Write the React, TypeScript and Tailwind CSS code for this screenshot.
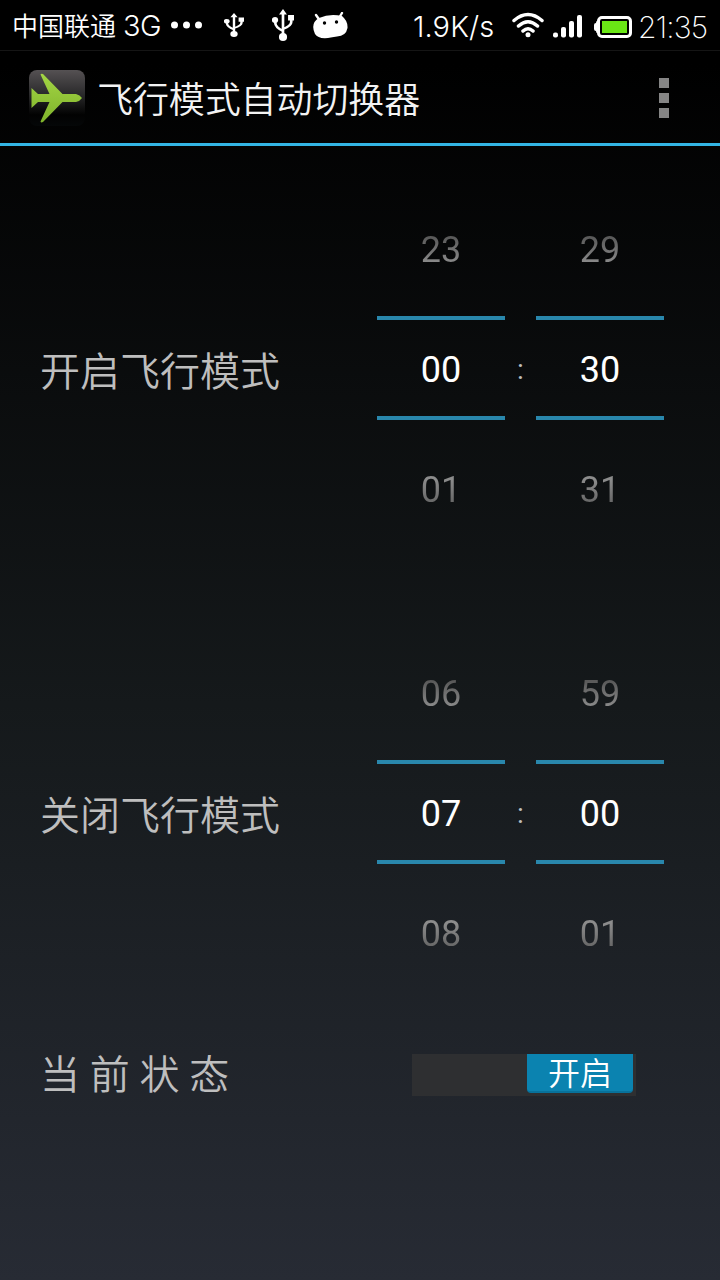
import React from "react";

const cjk = "font-['Roboto','Noto_Sans_CJK_SC',sans-serif]";

function Usb({ className }: { className: string }) {
  return (
    <svg viewBox="0 0 20 32" preserveAspectRatio="none" className={className} fill="none" stroke="#fff" strokeWidth="2.4">
      <path d="M10 4V28M3 11V14Q3 18 10 22M17.5 9V13Q17.5 17 10 20" />
      <ellipse cx="10" cy="28" rx="3.7" ry="3.9" fill="#fff" stroke="none" />
      <circle cx="2.7" cy="11" r="2.9" fill="#fff" stroke="none" />
      <path d="M14.6 6H20V11.5H14.6ZM10 0L13.6 5.5H6.4Z" fill="#fff" stroke="none" />
    </svg>
  );
}

function StatusBar() {
  return (
    <div className="flex h-[51px] items-center border-b border-[#151515] bg-black text-white">
      <div className="ml-3 w-[104px] whitespace-nowrap font-['Noto_Sans_CJK_SC',sans-serif] text-[26px] font-[350] leading-[48px]">中国联通</div>
      <div className="ml-[7px] w-[39px] pt-px font-['Inter',sans-serif] text-[29px] font-light leading-[50px] tracking-[-0.5px]">3G</div>
      <svg className="ml-[9px] h-2 w-8" viewBox="0 0 32 8" fill="#fff">
        <circle cx="3.5" cy="4" r="3.5" /><circle cx="15.5" cy="4" r="3.5" /><circle cx="27.5" cy="4" r="3.5" />
      </svg>
      <Usb className="ml-[21px] h-6 w-5" />
      <Usb className="ml-[28px] h-8 w-[22px]" />
      <svg className="ml-[19px] h-[27px] w-[35px]" viewBox="0 0 35 27">
        <path d="M3 3L6.5 8M29 1L26 6" stroke="#fff" strokeWidth="2.4" strokeLinecap="round" />
        <path d="M6 6Q17 1 29 4Q35 9 34.5 16Q33 24 24 24.5Q19 25 15 26Q5 27 2 22Q-3 11 6 6Z" fill="#fff" />
        <circle cx="11.5" cy="11" r="1.7" /><circle cx="23.5" cy="10" r="1.7" />
      </svg>
      <div className="ml-auto flex items-center">
        <div className="w-[82px] whitespace-nowrap pt-[3px] font-['Inter',sans-serif] text-[29px] font-light leading-[50px] tracking-[0.1px]">1.9K/s</div>
        <svg className="ml-[17px] h-[26px] w-8" viewBox="0 0 32 26" fill="none" stroke="#fff" strokeWidth="3.5" strokeLinecap="round">
          <path d="M2 8.5Q16-3.5 30 8.5M6.5 14Q16 5.5 25.5 14M11 19Q16 14.5 21 19" />
          <circle cx="16" cy="22.7" r="2.5" fill="#fff" stroke="none" />
        </svg>
        <svg className="ml-[9px] mt-0.5 h-6 w-[29px]" viewBox="0 0 29 24" fill="#fff">
          <rect y="18.5" width="5" height="5" rx="2" /><rect x="8" y="13" width="5" height="10.5" rx="2" />
          <rect x="16" y="7" width="5" height="16.5" rx="2" /><rect x="24" y="1" width="5" height="22.5" rx="2" />
        </svg>
        <svg className="ml-3 mt-1 h-[22px] w-[38px]" viewBox="0 0 38 22">
          <path d="M5 5H3Q2 5 2 7Q0 7 0 9V13Q0 15 2 15Q2 17 3 17H5Z" fill="#fff" />
          <rect x="4.5" y="1.5" width="32" height="19" rx="3.5" stroke="#fff" strokeWidth="3" />
          <rect x="8" y="5" width="25" height="12" fill="#6ae615" />
        </svg>
        <div className="mr-3 w-[76px] whitespace-nowrap pl-1.5 pt-[3px] font-['Inter',sans-serif] text-[30px] font-extralight leading-[48px] tracking-[-0.8px]">21:35</div>
      </div>
    </div>
  );
}

function ActionBar() {
  return (
    <div className="flex h-[95px] items-center border-b-[3px] border-[#33b5e5] pl-[29px] pr-[51px]">
      <svg className="mt-px h-14 w-14" viewBox="0 0 56 56">
        <defs>
          <linearGradient id="tile" x1="0" y1="0" x2="0" y2="1">
            <stop stopColor="#555153" /><stop offset=".45" stopColor="#29292a" /><stop offset=".8" stopColor="#020202" /><stop offset="1" stopColor="#050708" />
          </linearGradient>
          <linearGradient id="plane" x1="0" y1="0" x2="0" y2="1">
            <stop stopColor="#a3d544" /><stop offset="1" stopColor="#7fb32b" />
          </linearGradient>
        </defs>
        <rect width="56" height="56" rx="8" fill="url(#tile)" />
        <path d="M2.5 18L9 24H20.5L11.5 4.5Q12 3.5 14 4L33.5 24H47Q51 25 53 28Q51 31 47 32H33.5L14 52Q12 53 11.5 51.5L20.5 32H9L2.5 38Z" fill="url(#plane)" />
      </svg>
      <h1 className={`${cjk} ml-3 whitespace-nowrap pt-[7px] text-[36px] font-[350] leading-[54px] tracking-[-0.1px] text-[#f3f3f3]`}>飞行模式自动切换器</h1>
      <div className="ml-auto mt-0.5 flex flex-col gap-[5px]">
        <i className="size-2.5 bg-[#858585]" /><i className="size-2.5 bg-[#858585]" /><i className="size-2.5 bg-[#858585]" />
      </div>
    </div>
  );
}

function Picker({ values }: { values: string[] }) {
  return (
    <div className="flex w-32 flex-col text-center font-['Roboto',sans-serif] text-[36px] font-[370] leading-[42px]">
      <div className="mt-px h-[87px] bg-linear-to-b/srgb from-[#5a5a5a] from-10% to-[#8c8c8c] to-40% bg-clip-text text-transparent">{values[0]}</div>
      <div className="flex h-[104px] items-center justify-center border-y-4 border-[#2987ac] pt-[3px] text-white">{values[1]}</div>
      <div className="h-[91px] bg-linear-to-b/srgb from-[#8c8c8c] from-65% to-[#5a5a5a] to-100% bg-clip-text pt-[49px] text-transparent">{values[2]}</div>
    </div>
  );
}

function TimeRow({ label, hours, minutes }: { label: string; hours: string[]; minutes: string[] }) {
  return (
    <div className="flex h-[282px] items-start pl-10">
      <div className={`${cjk} mt-[115px] w-[337px] whitespace-nowrap text-[40px] font-[350] leading-[60px] text-[#bebebe]`}>{label}</div>
      <Picker values={hours} />
      <div className="mt-[122px] w-[31px] text-center font-['Roboto',sans-serif] text-[28px] leading-[40px] text-[#bebebe]">:</div>
      <Picker values={minutes} />
    </div>
  );
}

export default function App() {
  return (
    <div className="flex h-[1280px] w-[720px] flex-col overflow-hidden bg-linear-to-b/srgb from-black from-5% via-[#15191b] via-55% to-[#272b34]">
      <StatusBar />
      <ActionBar />
      <main className="flex flex-col pt-[82px]">
        <TimeRow label="开启飞行模式" hours={["23", "00", "01"]} minutes={["29", "30", "31"]} />
        <div className="h-[162px]" />
        <TimeRow label="关闭飞行模式" hours={["06", "07", "08"]} minutes={["59", "00", "01"]} />
        <div className="mt-[79px] flex h-[84px] items-center pl-10">
          <div className={`${cjk} w-[372px] whitespace-pre pt-0.5 text-[40px] font-[350] leading-[60px] text-[#bebebe]`}>当 前 状 态</div>
          <button className="flex h-[42px] w-56 justify-end bg-[#2e2f31] pb-[3px] pr-[3px]">
            <span className={`${cjk} flex h-[39px] w-[106px] items-center justify-center rounded-b-sm border-b-2 border-[#08719a] bg-[#0b83b0] pt-1 text-[32px] font-[350] leading-[39px] text-white`}>开启</span>
          </button>
        </div>
      </main>
    </div>
  );
}
